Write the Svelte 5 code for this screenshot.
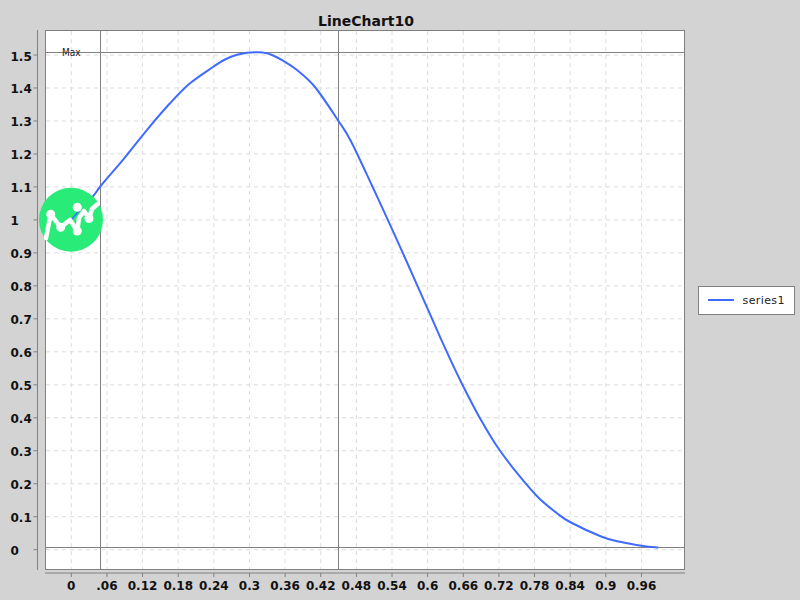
<script>
    // Axis scales, taken from the chart's tick positions
    const xAt = (v) => 71.3 + v * 593.9;
    const yAt = (v) => 549.7 - v * 329.8;

    const yTicks = [
        '1.5', '1.4', '1.3', '1.2', '1.1', '1', '0.9', '0.8',
        '0.7', '0.6', '0.5', '0.4', '0.3', '0.2', '0.1', '0'
    ].map((label) => ({ label, y: yAt(parseFloat(label)) }));

    const xTicks = [
        '0', '.06', '0.12', '0.18', '0.24', '0.3', '0.36', '0.42', '0.48',
        '0.54', '0.6', '0.66', '0.72', '0.78', '0.84', '0.9', '0.96'
    ].map((label) => ({ label, x: xAt(parseFloat(label)) }));

    const points = [
        [71, 220], [92.7, 196.7], [100.7, 186], [125, 157.3], [148.3, 128.3],
        [170, 103.3], [190, 83.3], [213, 67], [225, 59.5], [237, 54.8],
        [247, 52.8], [255, 52.3], [263, 52.6], [272, 55], [283, 60.7], [297, 70],
        [315, 87], [338.3, 120.7], [350.7, 140.7], [371.7, 185], [391.7, 228.3],
        [419, 289.3], [433.3, 321.7], [446.7, 351.7], [461.7, 383.3], [480, 418.3],
        [498.3, 448.3], [520, 476.7], [538.3, 497.5], [556.7, 513], [570, 522],
        [601.7, 536.7], [620, 541.7], [643.3, 546], [658.3, 547.6]
    ];

    // Catmull-Rom through the sampled points, so the line has no corners
    function smooth (pts) {
        let d = `M${pts[0][0]} ${pts[0][1]}`;
        for (let i = 0; i < pts.length - 1; i++) {
            const a = pts[Math.max(i - 1, 0)];
            const b = pts[i];
            const c = pts[i + 1];
            const e = pts[Math.min(i + 2, pts.length - 1)];
            const c1 = [b[0] + (c[0] - a[0]) / 6, b[1] + (c[1] - a[1]) / 6];
            const c2 = [c[0] - (e[0] - b[0]) / 6, c[1] - (e[1] - b[1]) / 6];
            d += ` C${c1[0].toFixed(1)} ${c1[1].toFixed(1)} ${c2[0].toFixed(1)} ${c2[1].toFixed(1)} ${c[0]} ${c[1]}`;
        }
        return d;
    }

    const curve = smooth(points);
    const dots = [[50.7, 214.3], [60.7, 227.3], [77.3, 231], [89, 218.5], [77.3, 207.3]];
</script>

<div class="page">
    <svg class="chart" width="692" height="600" viewBox="0 0 692 600">
        <text class="title" x="366" y="26" text-anchor="middle">LineChart10</text>

        <rect class="plot" x="45.5" y="30.5" width="639" height="539" />

        {#each yTicks as t}
            <line class="grid" x1="46" x2="684" y1={t.y} y2={t.y} />
            <line class="axis" x1="33.5" x2="37.5" y1={t.y} y2={t.y} />
            <text class="tick" x="10.5" y={t.y + 5.5}>{t.label}</text>
        {/each}

        {#each xTicks as t}
            <line class="grid" x1={t.x} x2={t.x} y1="31" y2="569" />
            <line class="axis" x1={t.x} x2={t.x} y1="573" y2="577" />
            <text class="tick" x={t.x} y="590" text-anchor="middle">{t.label}</text>
        {/each}

        <line class="axis" x1="37.5" x2="37.5" y1="30" y2="570" />
        <line class="axis" x1="45" x2="685" y1="573" y2="573" />

        <!-- Markers -->
        <line class="axis" x1="100.5" x2="100.5" y1="30" y2="570" />
        <line class="axis" x1="338.5" x2="338.5" y1="30" y2="570" />
        <line class="axis" x1="45" x2="685" y1="52.5" y2="52.5" />
        <line class="axis" x1="45" x2="685" y1="547.5" y2="547.5" />
        <text class="max" x="62" y="56">Max</text>

        <path class="series" d={curve} />

        <!-- Logo over the chart -->
        <circle class="logo" cx="71" cy="219.7" r="32" />
        <line class="series thin" x1="71" y1="220" x2="79" y2="211" />
        <polyline
            class="logo-line"
            points="46,238 47,233 50.7,214.3 60.7,227.3 70,220 77.3,231 79,218 84,211 89,218.5 92,209 97,204.5"
        />
        {#each dots as d}
            <circle class="logo-dot" cx={d[0]} cy={d[1]} r="4.5" />
        {/each}
    </svg>

    <div class="legend">
        <span class="swatch"></span>
        <span class="name">series1</span>
    </div>
</div>

<style>
    :global(body) {
        margin: 0;
    }

    .page {
        display: flex;
        align-items: center;
        width: 800px;
        height: 600px;
        background: #d3d3d3;
        font-family: "DejaVu Sans", sans-serif;
        overflow: hidden;
    }

    .chart {
        display: block;
        flex: none;
    }

    .title {
        font-size: 14px;
        font-weight: bold;
        fill: #111;
    }

    .plot {
        fill: #fff;
        stroke: #808080;
    }

    .grid {
        stroke: #dcdcdc;
        stroke-dasharray: 4 4;
    }

    .axis {
        stroke: #808080;
    }

    .tick {
        font-size: 12px;
        font-weight: bold;
        fill: #111;
    }

    .max {
        font-family: "DejaVu Sans Condensed", "DejaVu Sans", sans-serif;
        font-size: 10px;
        fill: #222;
    }

    .series {
        fill: none;
        stroke: #3f6bff;
        stroke-width: 2;
        stroke-linejoin: round;
    }

    .thin {
        stroke-width: 1.5;
    }

    .logo {
        fill: #29eb77;
    }

    .logo-line {
        fill: none;
        stroke: #fff;
        stroke-width: 4.5;
        stroke-linejoin: round;
        stroke-linecap: round;
    }

    .logo-dot {
        fill: #fff;
    }

    .legend {
        display: flex;
        align-items: center;
        gap: 9px;
        box-sizing: border-box;
        width: 97px;
        height: 29px;
        margin-left: 6px;
        padding-left: 8.5px;
        background: #fff;
        border: 1px solid #808080;
    }

    .swatch {
        width: 26px;
        height: 2px;
        background: #3f6bff;
    }

    .name {
        font-size: 11px;
        letter-spacing: 0.4px;
        color: #222;
    }
</style>
